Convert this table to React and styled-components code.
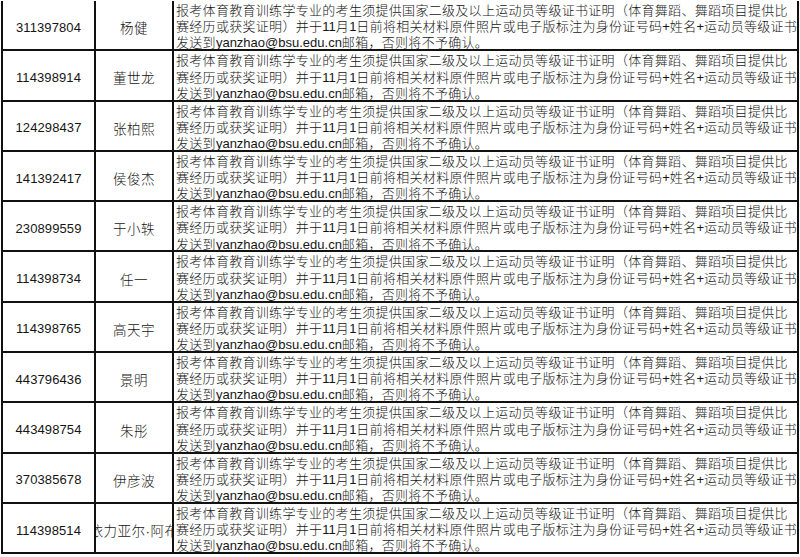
import React from "react";
import styled, { createGlobalStyle } from "styled-components";

const Global = createGlobalStyle`
  html, body { margin: 0; padding: 0; background: #fff; }
  body { width: 800px; height: 557px; overflow: hidden; }
`;

const Table = styled.div`
  margin-left: 1px;
  padding-top: 1px;
  width: 798px;
  display: flex;
  flex-direction: column;
  color: #151515;
`;

const Row = styled.div`
  display: grid;
  grid-template-columns: 93px 78px 1fr;
  height: 50.3px;
  box-sizing: border-box;
  border-left: 2px solid #111;
  border-bottom: 2px solid #111;
`;

const Cell = styled.div`
  box-sizing: border-box;
  border-right: 2px solid #111;
  overflow: hidden;
  display: flex;
  justify-content: center;
  align-items: center;
  padding-top: 4px;
  white-space: nowrap;
`;

const IdCell = styled(Cell)`
  font-family: "Liberation Sans", Arial, sans-serif;
  font-size: 13px;
  letter-spacing: 0.1px;
`;

const NameCell = styled(Cell)`
  font-family: "Liberation Sans", "Noto Sans CJK SC", sans-serif;
  font-size: 13.5px;
  font-weight: 300;
  letter-spacing: 0.5px;
`;

const NoteCell = styled.div`
  box-sizing: border-box;
  border-right: 2px solid #111;
  overflow: hidden;
  display: flex;
  flex-direction: column;
  padding: 2px 0 0 2px;
  font-family: "Liberation Sans", "Noto Sans CJK SC", sans-serif;
  font-size: 13px;
  font-weight: 300;
  line-height: 16.2px;
  letter-spacing: 0.3px;
`;

const Line = styled.span`
  display: block;
  white-space: nowrap;
`;

const Latin = styled.span`
  letter-spacing: 0;
`;

const rows = [
  ["311397804", "杨健"],
  ["114398914", "董世龙"],
  ["124298437", "张柏熙"],
  ["141392417", "侯俊杰"],
  ["230899559", "于小轶"],
  ["114398734", "任一"],
  ["114398765", "高天宇"],
  ["443796436", "景明"],
  ["443498754", "朱彤"],
  ["370385678", "伊彦波"],
  ["114398514", "依力亚尔·阿布"],
];

function Note() {
  return (
    <NoteCell>
      <Line>报考体育教育训练学专业的考生须提供国家二级及以上运动员等级证书证明（体育舞蹈、舞蹈项目提供比</Line>
      <Line>
        赛经历或获奖证明）并于<Latin>11</Latin>月<Latin>1</Latin>日前将相关材料原件照片或电子版标注为身份证号码<Latin>+</Latin>姓名<Latin>+</Latin>运动员等级证书
      </Line>
      <Line>
        发送到<Latin>yanzhao@bsu.edu.cn</Latin>邮箱，否则将不予确认。
      </Line>
    </NoteCell>
  );
}

export default function App() {
  return (
    <>
      <Global />
      <Table>
        {rows.map(([id, name]) => (
          <Row key={id}>
            <IdCell>{id}</IdCell>
            <NameCell>{name}</NameCell>
            <Note />
          </Row>
        ))}
      </Table>
    </>
  );
}
